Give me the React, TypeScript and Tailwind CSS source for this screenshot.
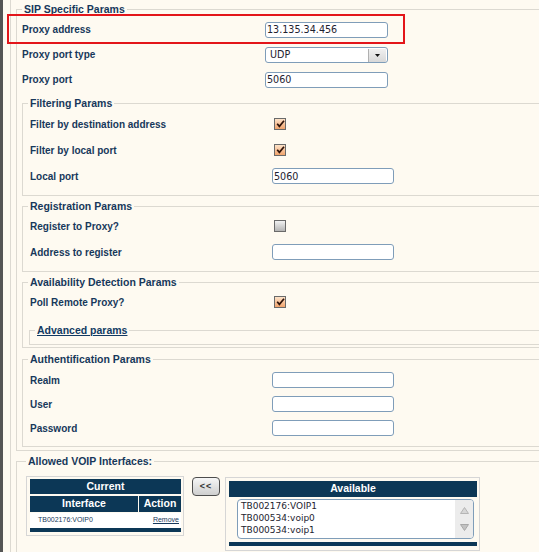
import React from 'react';

const LABEL_FONT = "font-['Liberation_Sans',Arial,sans-serif]";
const FIELD_FONT = "font-['DejaVu_Sans',Verdana,sans-serif]";

function Check({ checked }: { checked: boolean }) {
  return (
    <span
      className={`ml-[2px] inline-flex h-[12px] w-[12px] items-center justify-center border border-[#6a6a6a] ${
        checked ? 'bg-linear-to-b from-[#fde3c9] to-[#f1a36c]' : 'bg-linear-to-b from-[#f2f2f2] to-[#b4b4b4]'
      }`}
    >
      {checked && (
        <svg width="9" height="8" viewBox="0 0 9 8">
          <path d="M1.2 3.8 L3.4 6.4 L8 0.8" stroke="#2e1208" strokeWidth="1.7" fill="none" />
        </svg>
      )}
    </span>
  );
}

function TextBox({ value = '', wide = false }: { value?: string; wide?: boolean }) {
  return (
    <input
      readOnly
      value={value}
      className={`${FIELD_FONT} h-[16px] ${wide ? 'w-[122px]' : 'w-[123px]'} rounded-[3px] border border-[#7f9db9] bg-white pl-[1px] text-[9.6px] leading-[14px] text-[#1e2230] outline-none`}
    />
  );
}

function Row({ label, h = 'h-[26px]', labelW = 'w-[242px]', children }: { label: string; h?: string; labelW?: string; children?: React.ReactNode }) {
  return (
    <div className={`flex items-center ${h}`}>
      <span className={`${labelW} shrink-0 text-[10px] font-bold`}>{label}</span>
      {children}
    </div>
  );
}

function Group({ title, className = '', legendClass = '-ml-[2px] px-[2px]', children }: { title: React.ReactNode; className?: string; legendClass?: string; children?: React.ReactNode }) {
  return (
    <fieldset className={`min-w-0 border border-[#dcd9d1] ${className}`}>
      <legend className={`${legendClass} text-[10.5px] font-bold leading-[14px]`}>{title}</legend>
      {children}
    </fieldset>
  );
}

export default function App() {
  return (
    <div className={`${LABEL_FONT} relative flex h-[552px] w-[539px] overflow-hidden bg-[#fefaf1] text-[#17385b]`}>
      <div className="w-[3px] shrink-0 bg-[#555555]" />
      <div className="ml-[7px] w-[640px] shrink-0 border-l border-[#dcd9d1] pl-[5px]">
        <Group title="SIP Specific Params" className="mt-[2px] pt-[1px] pl-[5px] pb-[3px]" legendClass="px-[2px]">
          <Row label="Proxy address" h="h-[25px]" labelW="w-[243px]">
            <TextBox value="13.135.34.456" />
          </Row>
          <Row label="Proxy port type" h="h-[25px]" labelW="w-[243px]">
            <div className={`${FIELD_FONT} mt-[1px] flex h-[16px] w-[123px] items-center rounded-[3px] border border-[#7f9db9] bg-white text-[9.6px] text-[#1e2230]`}>
              <span className="flex-1 pl-[4px]">UDP</span>
              <span className="mr-[1px] flex h-[13px] w-[18px] items-center justify-center border-l border-[#b0b0b0] bg-linear-to-b from-[#f0f0f0] to-[#d8d8d8]">
                <svg width="5" height="3" viewBox="0 0 5 3">
                  <path d="M0 0 H5 L2.5 3 Z" fill="#111" />
                </svg>
              </span>
            </div>
          </Row>
          <Row label="Proxy port" h="h-[25px]" labelW="w-[243px]">
            <TextBox value="5060" />
          </Row>

          <Group title="Filtering Params" className="mt-[4px] pt-[1px] pl-[7px] pb-[6px]">
            <Row label="Filter by destination address">
              <Check checked />
            </Row>
            <Row label="Filter by local port">
              <Check checked />
            </Row>
            <Row label="Local port">
              <TextBox value="5060" wide />
            </Row>
          </Group>

          <Group title="Registration Params" className="mt-[3px] pl-[7px] pb-[6px]">
            <Row label="Register to Proxy?">
              <Check checked={false} />
            </Row>
            <Row label="Address to register">
              <TextBox wide />
            </Row>
          </Group>

          <Group title="Availability Detection Params" className="mt-[3px] pl-[7px] pb-[2px]">
            <Row label="Poll Remote Proxy?">
              <Check checked />
            </Row>
            <Group
              title={<span className="underline text-[#123a63]">Advanced params</span>}
              className="-ml-[1px] mt-[8px] pb-[7px]"
              legendClass="ml-[5px] px-[2px]"
            />
          </Group>

          <Group title="Authentification Params" className="mt-[4px] pt-[2px] pl-[7px] pb-[6px]">
            <Row label="Realm" h="h-[24px]">
              <TextBox wide />
            </Row>
            <Row label="User" h="h-[24px]">
              <TextBox wide />
            </Row>
            <Row label="Password" h="h-[24px]">
              <TextBox wide />
            </Row>
          </Group>
        </Group>

        <Group title="Allowed VOIP Interfaces:" className="mt-[3px] h-[120px] pt-[8px] pl-[9px]" legendClass="px-[2px]">
          <div className="flex items-start">
            {/* current */}
            <div className="w-[158px] border border-[#d6d6d6] pt-[2px] pl-[3px] pr-[2px] pb-[3px]">
              <div className="flex h-[15px] items-center justify-center bg-[#0c3756] text-[10.5px] font-bold text-white">Current</div>
              <div className="mt-[2px] flex h-[16px] gap-[1px] text-[10.5px] font-bold text-white">
                <div className="flex w-[108px] items-center justify-center bg-[#0c3756]">Interface</div>
                <div className="flex w-[42px] items-center justify-center bg-[#0c3756]">Action</div>
              </div>
              <div className="mt-[1px] flex h-[15px] items-center bg-white text-[7px] text-[#17385b]">
                <span className="w-[109px] pl-[8px]">TB002176:VOIP0</span>
                <span className="w-[42px] pr-[2px] text-right underline">Remove</span>
              </div>
              <div className="h-[4px] bg-[#0c3756]" />
            </div>

            <button className="ml-[8px] mt-[1px] flex h-[19px] w-[28px] items-center justify-center rounded-[4px] border border-[#4d4d4d] bg-linear-to-b from-[#f6f6f6] to-[#cfcfcf] text-[9px] font-bold tracking-[1px] text-[#333]">
              &lt;&lt;
            </button>

            {/* available */}
            <div className="ml-[5px] mt-[1px] h-[74px] w-[255px] border border-[#d6d6d6] pt-[3px] pl-[3px] pr-[2px]">
              <div className="flex h-[16px] items-center justify-center bg-[#0c3756] text-[10.5px] font-bold text-white">Available</div>
              <div className={`${FIELD_FONT} ml-[8px] mt-[2px] flex h-[40px] w-[237px] overflow-hidden rounded-[4px] border border-[#7f9db9] bg-white text-[9px] leading-[12px] text-[#1d2430]`}>
                <div className="flex-1 pl-[3px]">
                  <div>TB002176:VOIP1</div>
                  <div>TB000534:voip0</div>
                  <div>TB000534:voip1</div>
                </div>
                <div className="flex w-[18px] flex-col items-center justify-around bg-[#ececec] py-[2px]">
                  <svg width="9" height="7" viewBox="0 0 9 7">
                    <path d="M4.5 0.5 L8.5 6.5 H0.5 Z" fill="#d6d6d6" stroke="#b5b5b5" />
                  </svg>
                  <svg width="9" height="7" viewBox="0 0 9 7">
                    <path d="M0.5 0.5 H8.5 L4.5 6.5 Z" fill="#c2c2c2" stroke="#a8a8a8" />
                  </svg>
                </div>
              </div>
              <div className="mt-[3px] h-[4px] bg-[#0c3756]" />
            </div>
          </div>
        </Group>
      </div>

      <div className="pointer-events-none absolute left-[7px] top-[14px] h-[30px] w-[398px] border-2 border-[#e3151a]" />
    </div>
  );
}
